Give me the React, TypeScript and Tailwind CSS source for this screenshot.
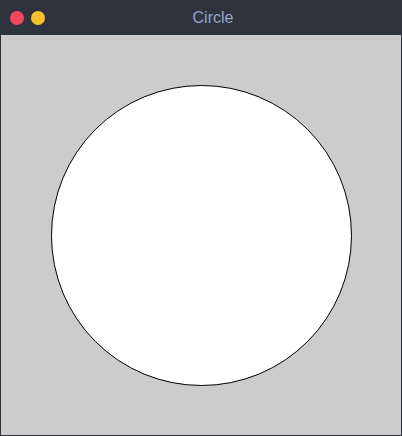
export default function App() {
  return (
    <div className="w-[402px] h-[436px] flex flex-col bg-[#2f333e] border border-[#2f333e]">
      {/* title bar */}
      <div className="relative h-[34px] shrink-0 flex items-center">
        <div className="absolute left-[9px] top-[10px] flex gap-[7px]">
          <span className="w-[14px] h-[14px] rounded-full bg-[#f2495c]" />
          <span className="w-[14px] h-[14px] rounded-full bg-[#fbc02d]" />
        </div>
        <div className="w-full pl-[24px] text-center text-[16px] text-[#8fa6c6] font-['Liberation_Sans',sans-serif]">
          Circle
        </div>
      </div>

      {/* canvas */}
      <div className="flex-1 bg-[#cccccc] flex items-center justify-center">
        <div className="w-[301px] h-[301px] rounded-full bg-white border border-black" />
      </div>
    </div>
  );
}
